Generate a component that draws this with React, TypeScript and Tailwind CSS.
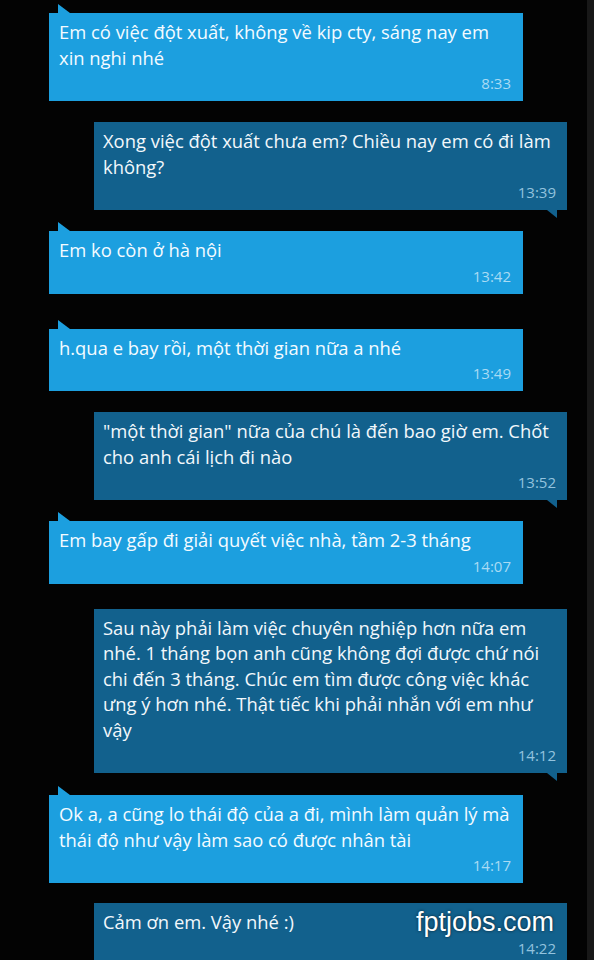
import React from 'react'

type Msg = { me: boolean; lines: string[]; time: string; gap: number }

const messages: Msg[] = [
  { me: false, gap: 13, time: '8:33', lines: ['Em có việc đột xuất, không về kip cty, sáng nay em', 'xin nghi nhé'] },
  { me: true, gap: 21, time: '13:39', lines: ['Xong việc đột xuất chưa em? Chiều nay em có đi làm', 'không?'] },
  { me: false, gap: 21, time: '13:42', lines: ['Em ko còn ở hà nội'] },
  { me: false, gap: 35, time: '13:49', lines: ['h.qua e bay rồi, một thời gian nữa a nhé'] },
  { me: true, gap: 21, time: '13:52', lines: ['"một thời gian" nữa của chú là đến bao giờ em. Chốt', 'cho anh cái lịch đi nào'] },
  { me: false, gap: 21, time: '14:07', lines: ['Em bay gấp đi giải quyết việc nhà, tầm 2-3 tháng'] },
  {
    me: true,
    gap: 25,
    time: '14:12',
    lines: [
      'Sau này phải làm việc chuyên nghiệp hơn nữa em',
      'nhé. 1 tháng bọn anh cũng không đợi được chứ nói',
      'chi đến 3 tháng. Chúc em tìm được công việc khác',
      'ưng ý hơn nhé. Thật tiếc khi phải nhắn với em như',
      'vậy',
    ],
  },
  { me: false, gap: 22, time: '14:17', lines: ['Ok a, a cũng lo thái độ của a đi, mình làm quản lý mà', 'thái độ như vậy làm sao có được nhân tài'] },
  { me: true, gap: 20, time: '14:22', lines: ['Cảm ơn em. Vậy nhé :)'] },
]

const Bubble = ({ msg }: { msg: Msg }) => {
  if (msg.me) {
    return (
      <div className="relative ml-[94px] w-[473px] bg-[#12618d] pl-[9px] pr-[11px] pt-[6px] pb-[8px]" style={{ marginTop: msg.gap }}>
        <div className="text-[18.4px] leading-[25.5px] text-[#f2f8fc]">
          {msg.lines.map((l, i) => (
            <div key={i} className="whitespace-nowrap">{l}</div>
          ))}
        </div>
        <div className="mt-[3px] h-[20px] text-right text-[15px] leading-[20px] text-[#93c3de]">{msg.time}</div>
        <svg className="absolute right-[10px] bottom-[-8px]" width="10" height="8" viewBox="0 0 10 8">
          <polygon points="0,0 10,0 10,8" fill="#12618d" />
        </svg>
      </div>
    )
  }
  return (
    <div className="relative ml-[49px] w-[474px] bg-[#1c9fdf] pl-[10px] pr-[12px] pt-[6px] pb-[8px]" style={{ marginTop: msg.gap }}>
      <div className="text-[18.4px] leading-[25.5px] text-[#f4fbff]">
        {msg.lines.map((l, i) => (
          <div key={i} className="whitespace-nowrap">{l}</div>
        ))}
      </div>
      <div className="mt-[3px] h-[20px] text-right text-[15px] leading-[20px] text-[#a9dbf4]">{msg.time}</div>
      <svg className="absolute left-[9px] top-[-9px]" width="12" height="9" viewBox="0 0 12 9">
        <polygon points="0,0 0,9 12,9" fill="#1c9fdf" />
      </svg>
    </div>
  )
}

export default function App() {
  return (
    <div className="relative flex h-[960px] w-[594px] overflow-hidden bg-[#030303]" style={{ fontFamily: '"Open Sans", "Noto Sans", sans-serif' }}>
      <div className="flex flex-1 flex-col">
        {messages.map((m, i) => (
          <Bubble key={i} msg={m} />
        ))}
      </div>
      <div className="w-[7px] bg-[#181818]" />
      <div
        className="absolute left-[416px] top-[904px] text-[27px] leading-[36px] text-white [text-shadow:0_0_3px_rgba(0,0,0,0.7)]"
        style={{ fontFamily: '"Liberation Sans", Arial, sans-serif' }}
      >
        fptjobs.com
      </div>
    </div>
  )
}
